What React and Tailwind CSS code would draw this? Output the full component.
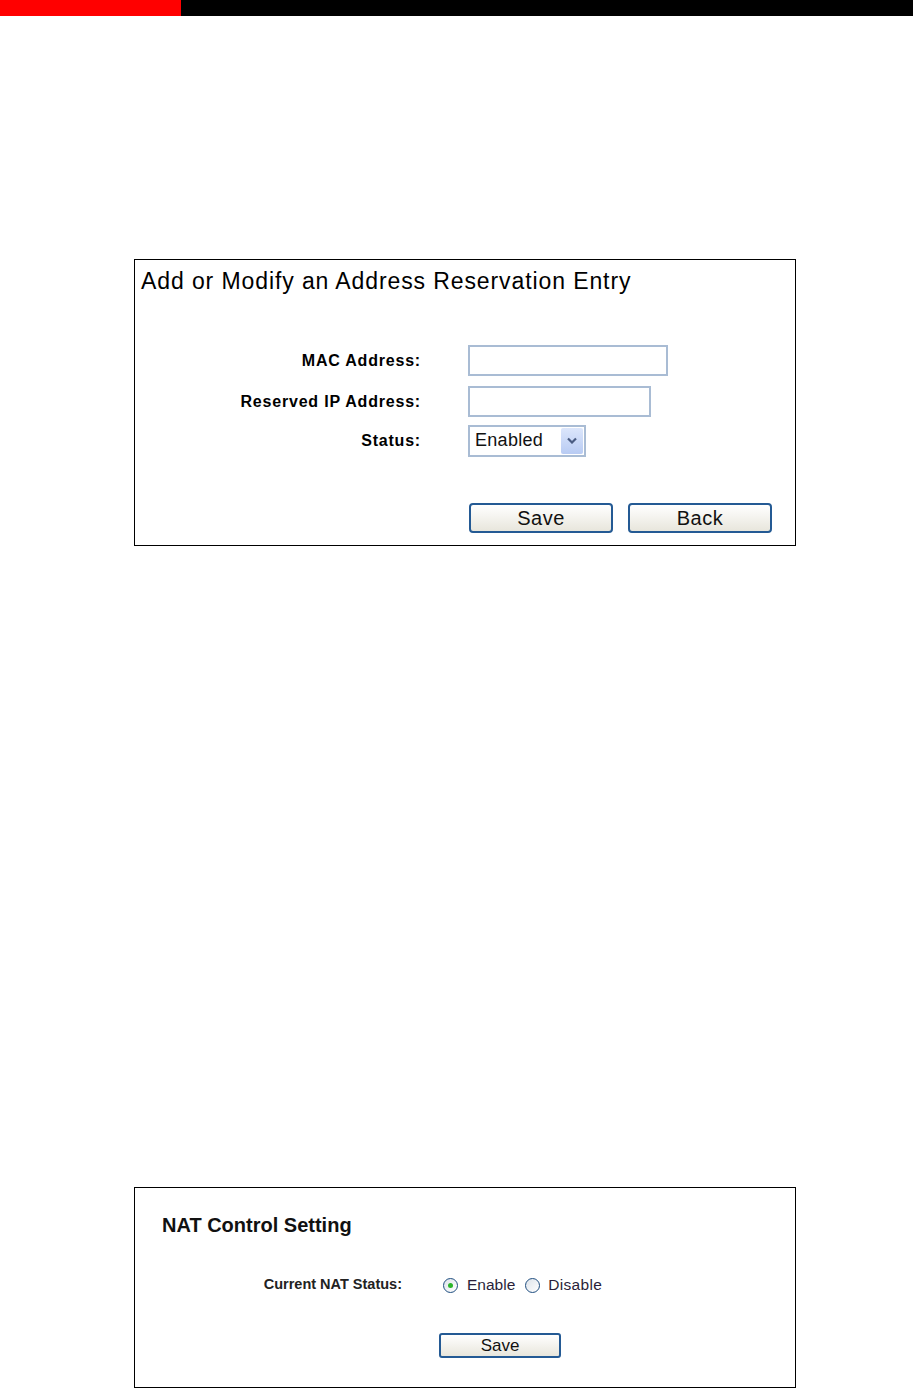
export default function App() {
  const font = { fontFamily: '"Liberation Sans", Arial, sans-serif' };
  return (
    <div className="w-[914px] h-[1388px] bg-white relative" style={font}>
      <div className="flex h-[16px] w-[913px]">
        <div className="w-[181px] bg-[#ff0000]" />
        <div className="flex-1 bg-black" />
      </div>

      <div className="ml-[134px] mt-[243px] w-[662px] h-[287px] border border-black flex flex-col">
        <div className="pl-[6px] pt-[6px] text-[23px] leading-[30px] tracking-[0.9px] text-black">
          Add or Modify an Address Reservation Entry
        </div>
        <div className="mt-[49px] flex flex-col gap-[10px]">
          <div className="flex items-center h-[31px]">
            <div className="w-[286px] text-right font-bold text-[16px] tracking-[0.8px] text-black">MAC Address:</div>
            <div className="ml-[47px] w-[200px] h-[31px] border-2 border-[#a9bcd4] bg-white" />
          </div>
          <div className="flex items-center h-[31px]">
            <div className="w-[286px] text-right font-bold text-[16px] tracking-[0.8px] text-black">Reserved IP Address:</div>
            <div className="ml-[47px] w-[183px] h-[31px] border-2 border-[#a9bcd4] bg-white" />
          </div>
          <div className="flex items-center h-[31px] -mt-[2px]">
            <div className="w-[286px] text-right font-bold text-[16px] tracking-[0.8px] text-black">Status:</div>
            <div className="ml-[47px] w-[118px] h-[32px] border-2 border-[#a9bcd4] bg-white flex items-center justify-between pl-[5px] pr-[1px]">
              <span className="text-[18px] tracking-[0.3px] text-[#111]">Enabled</span>
              <div className="w-[22px] h-[26px] bg-gradient-to-b from-[#dce6fb] to-[#b8cbf3] rounded-[2px] flex items-center justify-center">
                <svg width="10" height="7" viewBox="0 0 10 7">
                  <path d="M1 1.5 L5 5.5 L9 1.5" stroke="#4a5c82" strokeWidth="2.2" fill="none" />
                </svg>
              </div>
            </div>
          </div>
        </div>
        <div className="mt-[47px] flex gap-[15px] pl-[334px]">
          <button className="w-[144px] h-[30px] rounded-[4px] border-2 border-[#245a94] bg-gradient-to-b from-white to-[#e8e6dc] text-[20px] tracking-[0.5px] text-[#111] leading-none">Save</button>
          <button className="w-[144px] h-[30px] rounded-[4px] border-2 border-[#245a94] bg-gradient-to-b from-white to-[#e8e6dc] text-[20px] tracking-[0.5px] text-[#111] leading-none">Back</button>
        </div>
      </div>

      <div className="ml-[134px] mt-[641px] w-[662px] h-[201px] border border-black flex flex-col">
        <div className="pl-[27px] pt-[25px] text-[20px] font-bold leading-[24px] text-[#111]">
          NAT Control Setting
        </div>
        <div className="mt-[38px] flex items-center h-[20px]">
          <div className="w-[267px] text-right font-bold text-[14.5px] text-[#222]">Current NAT Status:</div>
          <div className="ml-[41px] flex items-center">
            <div className="w-[15px] h-[15px] rounded-full border border-[#1f4e80] bg-gradient-to-br from-[#dde3ea] to-white flex items-center justify-center">
              <div className="w-[5px] h-[5px] rounded-full bg-[#2bb52b]" />
            </div>
            <span className="ml-[9px] text-[15.5px] text-[#2a1f3a]">Enable</span>
            <div className="ml-[10px] w-[15px] h-[15px] rounded-full border border-[#1f4e80] bg-gradient-to-br from-[#dde3ea] to-white" />
            <span className="ml-[8px] text-[15.5px] tracking-[0.3px] text-[#2a1f3a]">Disable</span>
          </div>
        </div>
        <div className="mt-[38px] pl-[304px]">
          <button className="w-[122px] h-[25px] rounded-[3px] border-2 border-[#245a94] bg-gradient-to-b from-white to-[#e8e6dc] text-[17px] text-[#111] leading-none">Save</button>
        </div>
      </div>
    </div>
  );
}
